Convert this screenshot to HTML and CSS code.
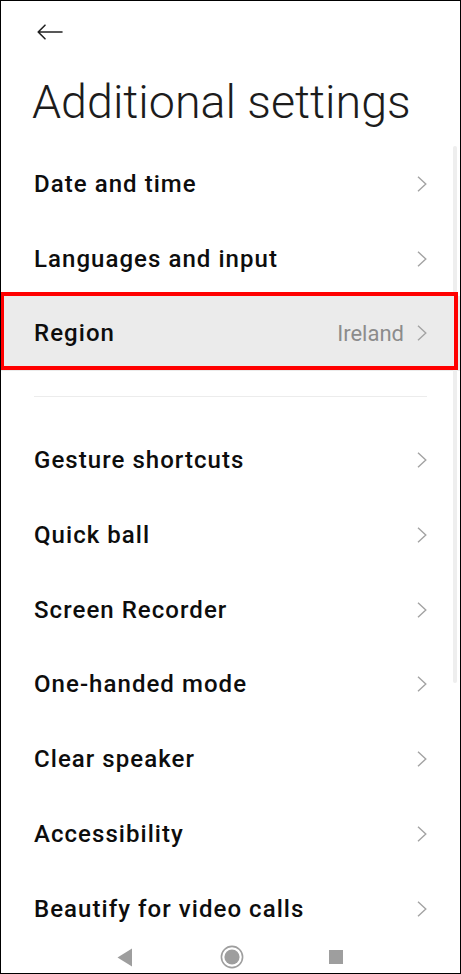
FILE: index.html
```html
<!DOCTYPE html>
<html lang="en">
<head>
<meta charset="utf-8">
<title>Additional settings</title>
<link rel="stylesheet" href="styles.css">
</head>
<body>
<div class="frame">
  <div class="screen">
    <div class="topbar">
      <svg class="back" width="26" height="16" viewBox="0 0 26 16" aria-hidden="true">
        <path d="M25 8H1.5M8 1.2L1.2 8L8 14.8" fill="none" stroke="#222" stroke-width="1.6" stroke-linecap="round" stroke-linejoin="round"/>
      </svg>
    </div>
    <h1 class="title">Additional settings</h1>
    <ul class="list">
      <li class="row"><span class="label">Date and time</span><span class="chev"></span></li>
      <li class="row"><span class="label">Languages and input</span><span class="chev"></span></li>
      <li class="row row-active"><span class="label">Region</span><span class="value">Ireland</span><span class="chev"></span></li>
    </ul>
    <div class="divider"></div>
    <ul class="list">
      <li class="row"><span class="label">Gesture shortcuts</span><span class="chev"></span></li>
      <li class="row"><span class="label">Quick ball</span><span class="chev"></span></li>
      <li class="row"><span class="label">Screen Recorder</span><span class="chev"></span></li>
      <li class="row"><span class="label">One-handed mode</span><span class="chev"></span></li>
      <li class="row"><span class="label">Clear speaker</span><span class="chev"></span></li>
      <li class="row"><span class="label">Accessibility</span><span class="chev"></span></li>
      <li class="row"><span class="label">Beautify for video calls</span><span class="chev"></span></li>
    </ul>
  </div>
  <nav class="navbar">
    <svg width="16" height="19" viewBox="0 0 16 19" aria-hidden="true"><path d="M15 0.5V18.5L0.5 9.5Z" fill="#9e9e9e"/></svg>
    <svg width="24" height="24" viewBox="0 0 24 24" aria-hidden="true"><circle cx="12" cy="12" r="10.6" fill="none" stroke="#9e9e9e" stroke-width="1.6"/><circle cx="12" cy="12" r="7.6" fill="#9e9e9e"/></svg>
    <svg width="14" height="14" viewBox="0 0 14 14" aria-hidden="true"><rect x="0" y="0" width="14" height="14" fill="#9e9e9e"/></svg>
  </nav>
  <div class="scrolltrack"></div>
  <div class="highlight"></div>
</div>
</body>
</html>
```

FILE: styles.css
```css
html, body {
  margin: 0;
  padding: 0;
  background: #fff;
}

.frame {
  position: relative;
  width: 461px;
  height: 974px;
  box-sizing: border-box;
  border: 1px solid #000;
  background: #fff;
  display: flex;
  flex-direction: column;
  overflow: hidden;
  font-family: Roboto, "Noto Sans", "Liberation Sans", sans-serif;
}

.screen {
  flex: 1;
  overflow: hidden;
  display: flex;
  flex-direction: column;
}

.topbar {
  height: 61px;
  flex: none;
  display: flex;
  align-items: center;
  padding-left: 36px;
  box-sizing: border-box;
}

.back {
  display: block;
}

.title {
  margin: 12px 0 16.5px 0;
  padding-left: 31px;
  font-size: 46.6px;
  line-height: 56px;
  font-weight: 300;
  color: #1c1c1c;
  letter-spacing: 0;
  white-space: nowrap;
}

.list {
  list-style: none;
  margin: 0;
  padding: 0;
  flex: none;
}

.row {
  height: 74.7px;
  display: flex;
  align-items: center;
  padding: 0 33px 0 33px;
  box-sizing: border-box;
}

.row-active {
  background: #ebebeb;
}

.label {
  flex: 1;
  font-size: 24px;
  font-weight: 500;
  letter-spacing: 1.05px;
  color: #0d0d0d;
  white-space: nowrap;
}

.value {
  font-size: 22px;
  font-weight: 400;
  color: #8c8c8c;
  margin-right: 13px;
}

.chev {
  width: 10px;
  height: 16px;
  flex: none;
  background-image: url("data:image/svg+xml;utf8,<svg xmlns='http://www.w3.org/2000/svg' width='10' height='16' viewBox='0 0 10 16'><path d='M1 0.8L8.8 8L1 15.2' fill='none' stroke='%23a3a3a3' stroke-width='1.4'/></svg>");
  background-repeat: no-repeat;
}

.divider {
  flex: none;
  height: 1px;
  background: #ececec;
  margin: 25px 33px 26.5px 33px;
}

.navbar {
  flex: none;
  height: 33px;
  display: flex;
  align-items: center;
  justify-content: center;
  box-sizing: border-box;
  padding-right: 2px;
  padding-top: 1px;
}

.navbar svg {
  display: block;
}

.navbar svg:nth-child(2) {
  margin: 0 85px 0 87px;
}

.scrolltrack {
  position: absolute;
  left: 452px;
  top: 145px;
  width: 4px;
  height: 537px;
  border-radius: 2px;
  background: #eeeeee;
}

.highlight {
  position: absolute;
  left: -1px;
  top: 291px;
  width: 458px;
  height: 78px;
  box-sizing: border-box;
  border: 4px solid #ff0000;
}
```
